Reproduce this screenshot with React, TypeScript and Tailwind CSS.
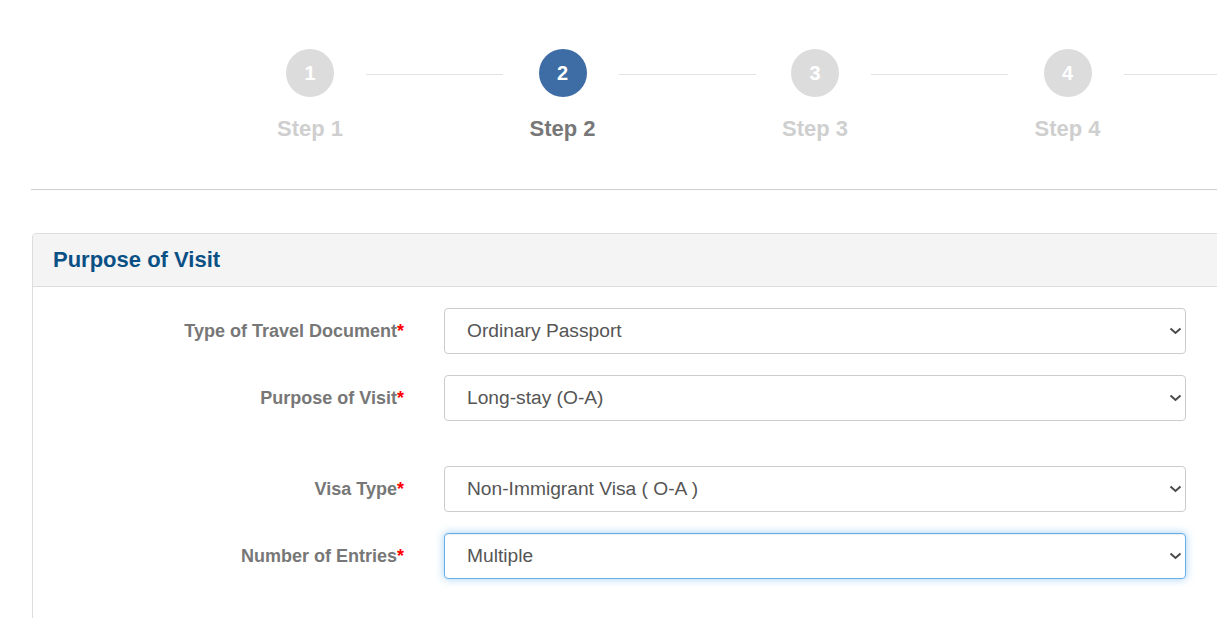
import React from "react";

const steps = [
  { n: 1, active: false },
  { n: 2, active: true },
  { n: 3, active: false },
  { n: 4, active: false },
];

const rows = [
  { label: "Type of Travel Document", value: "Ordinary Passport", focus: false, extra: false },
  { label: "Purpose of Visit", value: "Long-stay (O-A)", focus: false, extra: false },
  { label: "Visa Type", value: "Non-Immigrant Visa ( O-A )", focus: false, extra: true },
  { label: "Number of Entries", value: "Multiple", focus: true, extra: false },
];

function Chevron() {
  return (
    <svg width="13" height="8" viewBox="0 0 13 8" className="shrink-0">
      <path d="M1.5 1.5 L6.5 6 L11.5 1.5" fill="none" stroke="#4a4a4a" strokeWidth="2" />
    </svg>
  );
}

export default function App() {
  return (
    <div
      className="w-[1217px] h-[618px] overflow-hidden bg-white"
      style={{ fontFamily: '"Liberation Sans", Arial, sans-serif' }}
    >
      {/* Stepper */}
      <div className="flex pt-[49px] pl-[286px]">
        {steps.map((s) => (
          <div key={s.n} className="flex shrink-0">
            <div className="flex flex-col items-center w-[48px] shrink-0">
              <div
                className={
                  "w-[48px] h-[48px] rounded-full flex items-center justify-center text-white font-bold text-[20px] " +
                  (s.active ? "bg-[#3e6ca4]" : "bg-[#dcdcdc]")
                }
              >
                {s.n}
              </div>
              <div
                className={
                  "mt-[20px] whitespace-nowrap font-bold text-[22px] leading-[24px] " +
                  (s.active ? "text-[#777777]" : "text-[#cfcfcf]")
                }
              >
                Step {s.n}
              </div>
            </div>
            <div className="ml-[32px] mr-[35.5px] mt-[25px] w-[137px] h-[1px] bg-[#e3e3e3] shrink-0" />
          </div>
        ))}
      </div>

      {/* Divider */}
      <div className="ml-[31px] mt-[48px] h-[1px] bg-[#cfcfcf]" />

      {/* Panel */}
      <div className="ml-[32px] mt-[43px] w-[1220px] border border-[#dddddd] rounded-tl-[4px] h-[420px]">
        <div className="h-[53px] bg-[#f4f4f4] border-b border-[#dddddd] flex items-center pl-[20px] rounded-tl-[4px]">
          <h2 className="text-[22px] font-bold text-[#0b5085] leading-none">Purpose of Visit</h2>
        </div>
        <div className="pt-[21px] flex flex-col gap-[21px]">
          {rows.map((r) => (
            <div key={r.label} className={"flex items-center " + (r.extra ? "mt-[24px]" : "")}>
              <div className="w-[371px] shrink-0 text-right font-bold text-[18px] text-[#777777]">
                {r.label}
                <span className="text-[#ff0000]">*</span>
              </div>
              <div
                className={
                  "ml-[40px] w-[742px] h-[46px] rounded-[4px] border flex items-center justify-between pl-[22px] pr-[3px] bg-white " +
                  (r.focus
                    ? "border-[#66afe9] shadow-[inset_0_1px_1px_rgba(0,0,0,0.075),0_0_8px_rgba(102,175,233,0.6)]"
                    : "border-[#cccccc]")
                }
              >
                <span className="text-[19.2px] text-[#555555]">{r.value}</span>
                <Chevron />
              </div>
            </div>
          ))}
        </div>
      </div>
    </div>
  );
}
